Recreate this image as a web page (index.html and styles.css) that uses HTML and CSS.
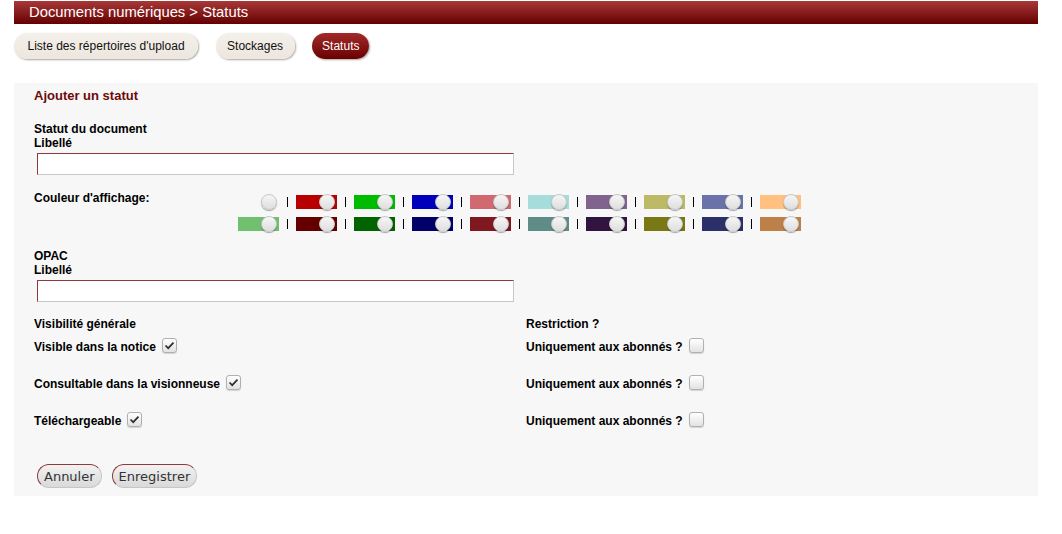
FILE: index.html
```html
<!DOCTYPE html>
<html lang="fr">
<head>
<meta charset="utf-8">
<title>Documents numériques &gt; Statuts</title>
<link rel="stylesheet" href="styles.css">
</head>
<body>
<div class="header">Documents numériques &gt; Statuts</div>
<nav class="tabs">
  <a class="tab wide">Liste des répertoires d'upload</a>
  <a class="tab">Stockages</a>
  <a class="tab active">Statuts</a>
</nav>
<form class="panel">
  <h2 class="title">Ajouter un statut</h2>

  <div class="block first">
    <div class="lbl">Statut du document</div>
    <div class="lbl">Libellé</div>
    <input class="field" type="text" autofocus>
  </div>

  <div class="colors">
    <div class="lbl colors-lbl">Couleur d'affichage:</div>
    <div class="grid">
      <div class="row">
        <span class="sw" style="background:transparent"><i class="knob"></i></span><span class="sep"></span>
        <span class="sw" style="background:#b80000"><i class="knob"></i></span><span class="sep"></span>
        <span class="sw" style="background:#00bc00"><i class="knob"></i></span><span class="sep"></span>
        <span class="sw" style="background:#0000bc"><i class="knob"></i></span><span class="sep"></span>
        <span class="sw" style="background:#d06a70"><i class="knob"></i></span><span class="sep"></span>
        <span class="sw" style="background:#a6dcdc"><i class="knob"></i></span><span class="sep"></span>
        <span class="sw" style="background:#80648e"><i class="knob"></i></span><span class="sep"></span>
        <span class="sw" style="background:#bcba64"><i class="knob"></i></span><span class="sep"></span>
        <span class="sw" style="background:#6a72aa"><i class="knob"></i></span><span class="sep"></span>
        <span class="sw" style="background:#ffc080"><i class="knob"></i></span>
      </div>
      <div class="row">
        <span class="sw" style="background:#70c070"><i class="knob"></i></span><span class="sep"></span>
        <span class="sw" style="background:#640000"><i class="knob"></i></span><span class="sep"></span>
        <span class="sw" style="background:#006400"><i class="knob"></i></span><span class="sep"></span>
        <span class="sw" style="background:#000068"><i class="knob"></i></span><span class="sep"></span>
        <span class="sw" style="background:#801820"><i class="knob"></i></span><span class="sep"></span>
        <span class="sw" style="background:#608c88"><i class="knob"></i></span><span class="sep"></span>
        <span class="sw" style="background:#321440"><i class="knob"></i></span><span class="sep"></span>
        <span class="sw" style="background:#7a7814"><i class="knob"></i></span><span class="sep"></span>
        <span class="sw" style="background:#2c3068"><i class="knob"></i></span><span class="sep"></span>
        <span class="sw" style="background:#bc8048"><i class="knob"></i></span>
      </div>
    </div>
  </div>

  <div class="block opac">
    <div class="lbl">OPAC</div>
    <div class="lbl">Libellé</div>
    <input class="field" type="text">
  </div>

  <div class="vis">
    <div class="col">
      <div class="lbl">Visibilité générale</div>
      <div class="chk-row"><span class="lbl">Visible dans la notice</span><span class="cb"><svg viewBox="0 0 15 15" width="15" height="15"><path d="M3.5 7.5 L6.2 10.2 L11.5 4.6" fill="none" stroke="#2e2e2e" stroke-width="1.7"/></svg></span></div>
      <div class="chk-row"><span class="lbl">Consultable dans la visionneuse</span><span class="cb"><svg viewBox="0 0 15 15" width="15" height="15"><path d="M3.5 7.5 L6.2 10.2 L11.5 4.6" fill="none" stroke="#2e2e2e" stroke-width="1.7"/></svg></span></div>
      <div class="chk-row"><span class="lbl">Téléchargeable</span><span class="cb"><svg viewBox="0 0 15 15" width="15" height="15"><path d="M3.5 7.5 L6.2 10.2 L11.5 4.6" fill="none" stroke="#2e2e2e" stroke-width="1.7"/></svg></span></div>
    </div>
    <div class="col">
      <div class="lbl">Restriction ?</div>
      <div class="chk-row"><span class="lbl">Uniquement aux abonnés ?</span><span class="cb"></span></div>
      <div class="chk-row"><span class="lbl">Uniquement aux abonnés ?</span><span class="cb"></span></div>
      <div class="chk-row"><span class="lbl">Uniquement aux abonnés ?</span><span class="cb"></span></div>
    </div>
  </div>

  <div class="actions">
    <button type="button" class="btn">Annuler</button>
    <button type="button" class="btn">Enregistrer</button>
  </div>
</form>
</body>
</html>
```
FILE: styles.css
```css
html, body {
  margin: 0;
  padding: 0;
  background: #fff;
}
body {
  font-family: "Liberation Sans", Arial, sans-serif;
  font-size: 12px;
  color: #000;
}

.header {
  margin: 1px 24px 0 14px;
  height: 23px;
  line-height: 22px;
  padding-left: 15px;
  font-size: 14.8px;
  color: #fff;
  background: linear-gradient(#a83838, #650000);
}

.tabs {
  display: flex;
  gap: 17.5px;
  margin: 9px 0 0 14px;
}
.tab {
  display: block;
  height: 26px;
  line-height: 26px;
  padding: 0 11.5px;
  border-radius: 13px;
  background: linear-gradient(#f4f0ea, #ece6de);
  box-shadow: 1px 1px 2px rgba(0,0,0,.35);
  color: #111;
  font-size: 12px;
}
.tab.wide {
  padding: 0 13.5px;
}
.tab.active {
  padding: 0 10px;
  background: linear-gradient(#a22a2a, #6a0000);
  color: #fff;
}

.panel {
  margin: 24px 24px 0 14px;
  padding: 6px 20px 8px 20px;
  background: #f7f7f7;
}
.title {
  margin: 0;
  font-size: 13px;
  line-height: 14px;
  font-weight: bold;
  color: #6e0a0a;
}
.lbl {
  font-weight: bold;
  line-height: 14px;
}

.block.first { margin-top: 19px; }
.block.opac { margin-top: 14px; }
.field {
  display: block;
  box-sizing: border-box;
  margin: 3px 0 0 3px;
  width: 477px;
  height: 22px;
  border: 1px solid #c8c8c8;
  border-top-color: #8e3a3a;
  border-left-color: #8e3a3a;
  background: #fff;
  padding: 0 4px;
  font: 12px "Liberation Sans", Arial, sans-serif;
  outline: none;
}

.colors {
  display: flex;
  margin-top: 16px;
}
.colors-lbl {
  width: 204px;
}
.row {
  display: flex;
  align-items: center;
  height: 22px;
}
.sw {
  display: flex;
  align-items: center;
  justify-content: flex-end;
  width: 41px;
  height: 14px;
  padding-right: 2px;
  box-sizing: border-box;
}
.knob {
  display: block;
  flex-shrink: 0;
  width: 16px;
  height: 16px;
  box-sizing: border-box;
  border-radius: 50%;
  border: 1px solid #c8c8c8;
  background: linear-gradient(#f6f6f6, #dedede);
  box-shadow: 0 1px 1px rgba(0,0,0,.35);
}
.sep {
  display: block;
  width: 1px;
  height: 10px;
  margin: 0 8px;
  background: #000;
}

.vis {
  display: grid;
  grid-template-columns: 492px auto;
  margin-top: 15px;
}
.chk-row {
  display: flex;
  align-items: center;
  height: 18px;
  margin-top: 19px;
}
.col .lbl + .chk-row { margin-top: 7px; }
.cb {
  display: block;
  width: 15px;
  height: 15px;
  box-sizing: border-box;
  margin: 0 0 4px 6px;
  border: 1px solid #b0b0b0;
  border-radius: 3px;
  background: linear-gradient(#ffffff, #e2e2e2);
  box-shadow: 0 1px 1px rgba(0,0,0,.15);
  overflow: hidden;
}
.cb svg {
  display: block;
  margin: -1px 0 0 -1px;
}

.actions {
  display: flex;
  gap: 10px;
  margin: 34px 0 0 3px;
}
.btn {
  height: 24px;
  padding: 0 6px;
  border: 1px solid #c6c6c6;
  border-top-color: #8e3a3a;
  border-left-color: #8e3a3a;
  border-radius: 12px;
  background: linear-gradient(#f2f2f2, #d9d9d9);
  font: 13px "DejaVu Sans", sans-serif;
  color: #333;
}
```
